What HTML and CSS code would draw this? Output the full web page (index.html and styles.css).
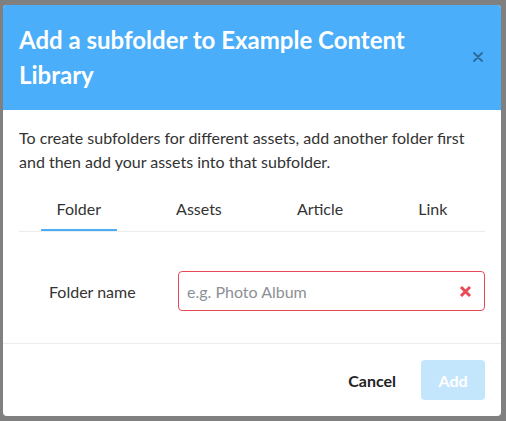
FILE: index.html
```html
<!DOCTYPE html>
<html lang="en">
<head>
    <meta charset="UTF-8">
    <meta name="viewport" content="width=device-width, initial-scale=1.0">
    <title>Add a subfolder</title>
    <link rel="stylesheet" href="styles.css">
</head>
<body>
    <div class="modal">
        <div class="modal-header">
            <h2>Add a subfolder to Example Content Library</h2>
            <button class="close-btn" aria-label="Close">
                <svg width="10" height="10" viewBox="0 0 10 10">
                    <path d="M1 1L9 9M9 1L1 9" stroke="currentColor" stroke-width="1.8" stroke-linecap="round"/>
                </svg>
            </button>
        </div>

        <div class="modal-body">
            <p class="intro">To create subfolders for different assets, add another folder first and then add your assets into that subfolder.</p>

            <div class="tabs">
                <div class="tab active">Folder</div>
                <div class="tab">Assets</div>
                <div class="tab">Article</div>
                <div class="tab">Link</div>
            </div>

            <div class="form-row">
                <label for="folderName">Folder name</label>
                <div class="input-wrap">
                    <input type="text" id="folderName" placeholder="e.g. Photo Album">
                    <svg class="clear-icon" width="13" height="13" viewBox="0 0 13 13">
                        <path d="M2 2L11 11M11 2L2 11" stroke="currentColor" stroke-width="3"/>
                    </svg>
                </div>
            </div>
        </div>

        <div class="modal-footer">
            <button class="btn-cancel">Cancel</button>
            <button class="btn-add" disabled>Add</button>
        </div>
    </div>
</body>
</html>
```

FILE: styles.css
```css
body {
    margin: 0;
    padding: 5px 5px 0 3px;
    background: #808080;
    font-family: 'Lato', 'Open Sans', sans-serif;
    color: #2b2b2b;
    height: 421px;
    box-sizing: border-box;
    overflow: hidden;
}

.modal {
    width: 498px;
    background: white;
    border-radius: 4px;
    overflow: hidden;
}

.modal-header {
    background: #4aaefa;
    display: flex;
    align-items: center;
    justify-content: space-between;
    padding: 17px 16px 18px 16px;
}

.modal-header h2 {
    margin: 0;
    color: white;
    font-size: 24px;
    line-height: 35px;
    font-weight: 700;
    max-width: 420px;
}

.close-btn {
    background: none;
    border: none;
    padding: 0;
    margin-right: 2px;
    color: #2b6b9b;
    display: flex;
}

.modal-body {
    padding: 16px 16px 0 16px;
}

.intro {
    margin: 0;
    font-size: 16px;
    line-height: 24px;
    color: #333;
}

.tabs {
    display: flex;
    justify-content: space-around;
    border-bottom: 1px solid #ececec;
    margin-top: 25px;
}

.tab {
    padding: 0 16px 10px 16px;
    font-size: 16px;
    line-height: 20px;
    color: #333;
    border-bottom: 2px solid transparent;
}

.tab.active {
    border-bottom-color: #4aaefa;
}

.form-row {
    display: flex;
    align-items: center;
    padding: 39px 0 32px 30px;
}

.form-row label {
    flex: 0 0 129px;
    font-size: 16px;
    color: #333;
}

.input-wrap {
    flex: 1;
    position: relative;
}

.input-wrap input {
    width: 100%;
    box-sizing: border-box;
    height: 40px;
    border: 1px solid #e84a57;
    border-radius: 4px;
    padding: 0 30px 0 8px;
    font-family: inherit;
    font-size: 16px;
    outline: none;
}

.input-wrap input::placeholder {
    color: #8c9096;
}

.clear-icon {
    position: absolute;
    right: 13px;
    top: 14px;
    color: #e84a57;
}

.modal-footer {
    border-top: 1px solid #ececec;
    display: flex;
    justify-content: flex-end;
    align-items: center;
    padding: 16px;
}

.btn-cancel {
    background: none;
    border: none;
    font-family: inherit;
    font-size: 16px;
    font-weight: 700;
    color: #222;
    padding: 0 16px;
    margin-right: 9px;
}

.btn-add {
    width: 64px;
    height: 40px;
    background: #c4e6fd;
    border: none;
    border-radius: 4px;
    color: white;
    font-family: inherit;
    font-size: 16px;
    font-weight: 700;
}
```
